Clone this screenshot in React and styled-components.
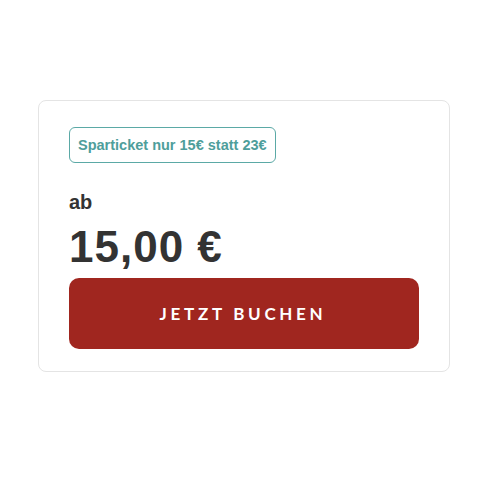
import React from 'react';
import styled, { createGlobalStyle } from 'styled-components';

const GlobalStyle = createGlobalStyle`
  body {
    margin: 0;
    background: #ffffff;
    font-family: "Liberation Sans", Arial, sans-serif;
  }
`;

const Page = styled.div`
  width: 480px;
  height: 480px;
  padding: 100px 0 0 38px;
  box-sizing: border-box;
`;

const Card = styled.div`
  width: 412px;
  box-sizing: border-box;
  border: 1px solid #e4e4e4;
  border-radius: 8px;
  padding: 26px 30px 22px 30px;
  display: flex;
  flex-direction: column;
  align-items: flex-start;
`;

const Badge = styled.div`
  border: 1.5px solid #5ba9a6;
  border-radius: 6px;
  padding: 0 8px;
  height: 36px;
  display: flex;
  align-items: center;
  color: #4e9e9b;
  font-weight: bold;
  font-size: 14.5px;
  box-sizing: border-box;
`;

const From = styled.div`
  margin-top: 27px;
  font-size: 20px;
  font-weight: bold;
  color: #333333;
  line-height: 24px;
`;

const Price = styled.div`
  margin-top: 10px;
  font-size: 44px;
  font-weight: bold;
  letter-spacing: 1px;
  color: #333333;
  line-height: 46px;
`;

const BookButton = styled.button`
  margin-top: 8px;
  width: 100%;
  height: 71px;
  border: none;
  border-radius: 10px;
  background: #a0261f;
  color: #ffffff;
  font-family: Lato, sans-serif;
  font-weight: bold;
  font-size: 17px;
  letter-spacing: 3.7px;
  padding-left: 4px;
  cursor: pointer;
`;

export default function App() {
  return (
    <>
      <GlobalStyle />
      <Page>
        <Card>
          <Badge>Sparticket nur 15€ statt 23€</Badge>
          <From>ab</From>
          <Price>15,00 €</Price>
          <BookButton>JETZT BUCHEN</BookButton>
        </Card>
      </Page>
    </>
  );
}
